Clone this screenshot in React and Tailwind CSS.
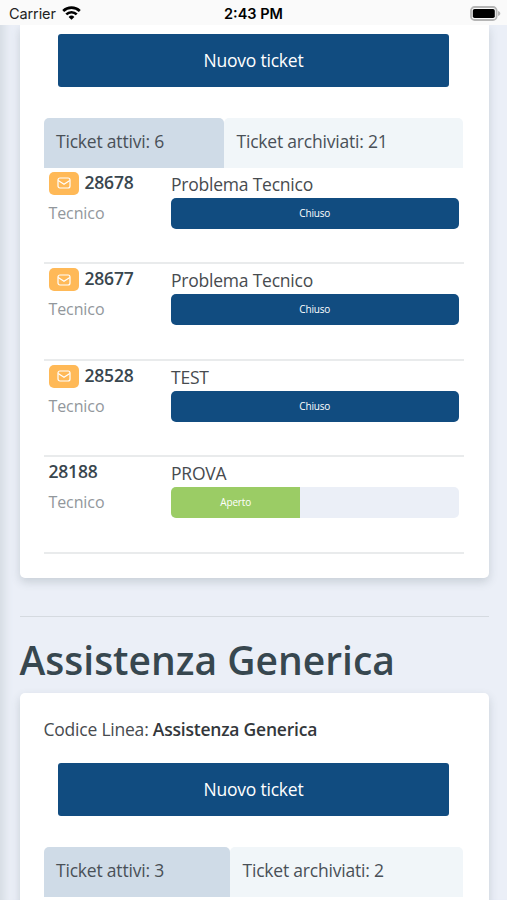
import React from 'react';

const firstTickets = [
    { id: '28678', type: 'Tecnico', title: 'Problema Tecnico', status: 'Chiuso', unread: true },
    { id: '28677', type: 'Tecnico', title: 'Problema Tecnico', status: 'Chiuso', unread: true },
    { id: '28528', type: 'Tecnico', title: 'TEST', status: 'Chiuso', unread: true },
    { id: '28188', type: 'Tecnico', title: 'PROVA', status: 'Aperto', unread: false },
];

function StatusBar() {
    return (
        <div className="relative z-10 grid h-[25px] shrink-0 grid-cols-3 items-center bg-[#fafafa] pt-[2px] font-['Inter','Liberation_Sans',sans-serif] text-[14.5px] text-[#222]">
            <div className="flex items-center gap-[6px] pl-[9px]">
                <span className="tracking-[-0.1px]">Carrier</span>
                <svg className="relative top-[-1px]" width="19" height="14" viewBox="0 0 19 14" fill="none" stroke="#000" strokeWidth="2.7">
                    <path d="M1.2 5a12 12 0 0 1 16.6 0" />
                    <path d="M4.3 8.4a7.4 7.4 0 0 1 10.4 0" />
                    <path d="M9.5 13.8 6.6 10.9a4.2 4.2 0 0 1 5.8 0Z" fill="#000" stroke="none" />
                </svg>
            </div>
            <div className="text-center text-[14.5px] font-semibold text-black">2:43 PM</div>
            <div className="flex justify-end pr-[6px]">
                <svg className="relative top-[-0.5px]" width="31" height="15" viewBox="0 0 31 15">
                    <rect x="1" y="1" width="25.6" height="13" rx="3.6" fill="#fafafa" stroke="#b5b5b5" strokeWidth="1.8" />
                    <rect x="2.8" y="2.9" width="22" height="9.2" rx="1.8" fill="#000" />
                    <path d="M28 5c1.6.5 2.3 1.5 2.3 2.5S29.6 9.5 28 10Z" fill="#b5b5b5" />
                </svg>
            </div>
        </div>
    );
}

function NewTicketButton() {
    return (
        <button className="mx-[14.5px] flex h-[53px] shrink-0 items-center justify-center rounded-[3px] bg-[#114c80] pb-px text-[17.5px] tracking-[-0.22px] text-white">
            Nuovo ticket
        </button>
    );
}

function Tabs({ active, archived, activeWidth }) {
    return (
        <div className="mr-px flex h-[50px] shrink-0 text-[17.5px] tracking-[-0.2px] text-[#495057]">
            <div className={`flex items-center rounded-t-[5px] bg-[#cfdbe7] pb-[2px] pl-[12.5px] ${activeWidth}`}>
                Ticket attivi: {active}
            </div>
            <div className="flex flex-1 items-center rounded-t-[5px] bg-[#f1f6f9] pb-[2px] pl-[13px]">
                Ticket archiviati: {archived}
            </div>
        </div>
    );
}

function MailBadge() {
    return (
        <span className="mr-[6px] flex h-[23px] w-[30px] items-center justify-center rounded-[5px] bg-[#ffb957]">
            <svg width="14" height="12" viewBox="0 0 14 12" fill="none" stroke="#fff" strokeWidth="1.2" strokeLinejoin="round">
                <rect x="1" y="1" width="12" height="10" rx="2" />
                <path d="M1.2 3.6 7 7.3 12.8 3.6" />
            </svg>
        </span>
    );
}

function TicketRow({ ticket }) {
    const closed = ticket.status === 'Chiuso';

    return (
        <div className="flex h-[96.5px] shrink-0 border-b-2 border-[#e9ebec] px-[5px]">
            <div className="w-[122.5px] shrink-0">
                <div className="mt-[4px] flex h-[23px] items-center text-[17.5px] font-semibold tracking-[-0.2px] text-[#39464e]">
                    {ticket.unread && <MailBadge />}
                    <span className="relative top-[-1px]">{ticket.id}</span>
                </div>
                <div className="mt-[7px] text-[16px] leading-[23px] tracking-[-0.1px] text-[#92979c]">{ticket.type}</div>
            </div>
            <div className="flex-1 pt-[4px]">
                <div className="mb-px text-[17.5px] leading-[25px] tracking-[-0.22px] text-[#474b4f]">{ticket.title}</div>
                <div className="flex h-[31px] overflow-hidden rounded-[5px] bg-[#ebeff7] text-[10px] tracking-[-0.15px] text-white">
                    <div className={closed ? 'flex w-full items-center justify-center bg-[#114c80]' : 'flex w-[45%] items-center justify-center bg-[#9bcc65]'}>
                        {ticket.status}
                    </div>
                </div>
            </div>
        </div>
    );
}

export default function App() {
    return (
        <div className="flex h-[900px] w-[507px] flex-col overflow-hidden bg-[#ebeff7] font-['Open_Sans','Noto_Sans',sans-serif] shadow-[inset_12px_0_10px_-8px_#d3dae1]">
            <StatusBar />

            <div className="ml-[19.5px] mr-[18.5px] flex h-[553px] shrink-0 flex-col rounded-b-[5px] bg-white pl-[24px] pr-[25px] pt-[9px] shadow-[0_4px_10px_rgba(60,80,90,0.2)]">
                <NewTicketButton />
                <div className="h-[30.5px] shrink-0" />
                <Tabs active={6} archived={21} activeWidth="w-[180px]" />
                {firstTickets.map((ticket) => (
                    <TicketRow key={ticket.id} ticket={ticket} />
                ))}
            </div>

            <div className="ml-[19.5px] mr-[18.5px] mt-[37.5px] h-[1.5px] shrink-0 bg-[#d5dae0]" />

            <h1 className="ml-[19.5px] mt-[18.5px] h-[57px] shrink-0 text-[39px] font-semibold leading-[48px] text-[#37474f]">
                Assistenza Generica
            </h1>

            <div className="ml-[19.5px] mr-[18.5px] flex h-[300px] shrink-0 flex-col rounded-[5px] bg-white pl-[24px] pr-[25px] pt-[24px] shadow-[0_4px_10px_rgba(60,80,90,0.2)]">
                <div className="h-[46.5px] shrink-0 text-[17.5px] leading-[25px] tracking-[-0.22px] text-[#474b4f]">
                    Codice Linea: <span className="font-semibold text-[#33373b]">Assistenza Generica</span>
                </div>
                <NewTicketButton />
                <div className="h-[30.5px] shrink-0" />
                <Tabs active={3} archived={2} activeWidth="w-[186px]" />
            </div>
        </div>
    );
}
